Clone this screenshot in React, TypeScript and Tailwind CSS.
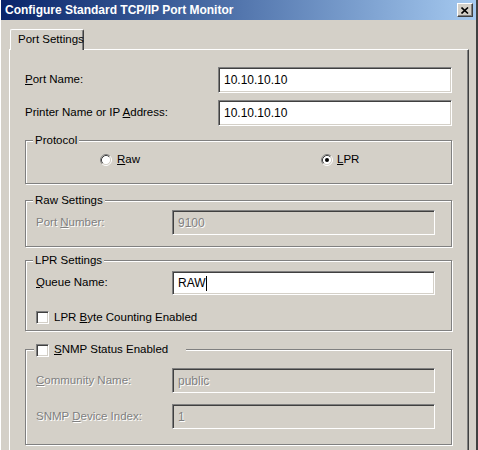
import React from 'react';

const sunken =
  'border border-t-[#808080] border-l-[#808080] border-b-white border-r-white shadow-[inset_1px_1px_0_#404040,inset_-1px_-1px_0_#d4d0c8]';
const etched = 'relative border border-[#808080] shadow-[inset_1px_1px_0_#fff,1px_1px_0_#fff]';
const disabledText = 'text-[#808080] [text-shadow:1px_1px_0_#fff]';

const Radio: React.FC<{ checked?: boolean }> = ({ checked }) => (
  <svg width="12" height="12" viewBox="0 0 12 12" className="shrink-0">
    <circle cx="6" cy="6" r="4.5" fill="#fff" />
    <path d="M2.11 9.89A5.5 5.5 0 0 1 9.89 2.11" fill="none" stroke="#808080" />
    <path d="M9.89 2.11A5.5 5.5 0 0 1 2.11 9.89" fill="none" stroke="#fff" />
    <path d="M2.82 9.18A4.5 4.5 0 0 1 9.18 2.82" fill="none" stroke="#404040" />
    <path d="M9.18 2.82A4.5 4.5 0 0 1 2.82 9.18" fill="none" stroke="#d4d0c8" />
    {checked && <circle cx="6" cy="6" r="2" fill="#000" />}
  </svg>
);

const Checkbox: React.FC = () => <span className={`w-[13px] h-[13px] shrink-0 bg-white ${sunken}`} />;

const GroupLabel: React.FC<{ children: React.ReactNode }> = ({ children }) => (
  <span className="absolute left-[7px] -top-[8px] px-[2px] leading-[14px] bg-[#d4d0c8]">{children}</span>
);

const Field: React.FC<{ value: string; disabled?: boolean; caret?: boolean; h?: string }> = ({
  value,
  disabled,
  caret,
  h = 'h-[25px]',
}) => (
  <div
    className={`w-[263px] ${h} flex items-center pl-[5px] ${sunken} ${
      disabled ? `bg-[#d4d0c8] ${disabledText}` : 'bg-white'
    }`}
  >
    <span className="text-[12px]">{value}</span>
    {caret && <span className="inline-block w-px h-[15px] bg-black" />}
  </div>
);

export default function App() {
  return (
    <div className="w-[478px] h-[450px] overflow-hidden bg-[#d4d0c8] flex flex-col border-l border-l-white border-r-2 border-r-[#404040] text-[11.5px] text-black font-['Liberation_Sans',Arial,sans-serif]">
      {/* Title bar */}
      <div className="h-[20px] shrink-0 flex items-center justify-between pl-[4px] pr-[3px] bg-linear-to-r from-[#0a246a] to-[#a6caf0]">
        <span className="text-white font-bold text-[12px]">Configure Standard TCP/IP Port Monitor</span>
        <button className="w-[16px] h-[14px] flex items-center justify-center bg-[#d4d0c8] border border-t-white border-l-white border-b-[#404040] border-r-[#404040] shadow-[inset_-1px_-1px_0_#808080]">
          <svg width="8" height="7" viewBox="0 0 8 7">
            <path d="M0.5 0.5L7 6.5M7 0.5L0.5 6.5" stroke="#000" strokeWidth="1.6" />
          </svg>
        </button>
      </div>

      {/* Tabs */}
      <div className="mt-[9px] pl-[9px] flex">
        <div className="relative z-10 -mb-px w-[74px] h-[21px] flex items-center pl-[7px] whitespace-nowrap bg-[#d4d0c8] border-t border-l border-t-white border-l-white border-r border-r-[#404040] shadow-[inset_-1px_0_0_#808080] rounded-t-[2px]">
          Port Settings
        </div>
      </div>

      {/* Tab panel */}
      <div className="ml-[8px] w-[460px] flex-1 border-t border-l border-t-white border-l-white border-r border-r-[#404040] shadow-[inset_-1px_0_0_#808080] pt-[17px] pl-[15px]">
        <div className="flex items-center">
          <span className="w-[193px]">
            <u>P</u>ort Name:
          </span>
          <div className={`w-[234px] h-[26px] flex items-center pl-[5px] bg-white ${sunken}`}>
            <span className="text-[12px]">10.10.10.10</span>
          </div>
        </div>
        <div className="flex items-center mt-[7px]">
          <span className="w-[193px]">
            Printer Name or IP <u>A</u>ddress:
          </span>
          <div className={`w-[234px] h-[26px] flex items-center pl-[5px] bg-white ${sunken}`}>
            <span className="text-[12px]">10.10.10.10</span>
          </div>
        </div>

        {/* Protocol */}
        <div className={`${etched} w-[427px] h-[44px] mt-[14px] pt-[12px] pl-[74px]`}>
          <GroupLabel>Protocol</GroupLabel>
          <div className="flex items-center h-[14px]">
            <label className="w-[221px] flex items-center gap-[5px]">
              <Radio />
              <span>
                <u>R</u>aw
              </span>
            </label>
            <label className="flex items-center gap-[4px]">
              <Radio checked />
              <span>
                <u>L</u>PR
              </span>
            </label>
          </div>
        </div>

        {/* Raw Settings */}
        <div className={`${etched} w-[427px] h-[47px] mt-[16px] pt-[9px] pl-[10px]`}>
          <GroupLabel>Raw Settings</GroupLabel>
          <div className="flex items-center">
            <span className={`w-[136px] ${disabledText}`}>
              Port <u>N</u>umber:
            </span>
            <Field value="9100" disabled />
          </div>
        </div>

        {/* LPR Settings */}
        <div className={`${etched} w-[427px] h-[71px] mt-[13px] pt-[10px] pl-[10px]`}>
          <GroupLabel>LPR Settings</GroupLabel>
          <div className="flex items-center">
            <span className="w-[136px]">
              <u>Q</u>ueue Name:
            </span>
            <Field value="RAW" caret h="h-[24px]" />
          </div>
          <label className="mt-[14px] flex items-center gap-[5px]">
            <Checkbox />
            <span>
              LPR <u>B</u>yte Counting Enabled
            </span>
          </label>
        </div>

        {/* SNMP */}
        <div className={`${etched} w-[427px] h-[96px] mt-[18px] pt-[18px] pl-[10px]`}>
          <label className="absolute left-[8px] -top-[7px] w-[152px] h-[14px] pl-[2px] flex items-center gap-[5px] bg-[#d4d0c8]">
            <Checkbox />
            <span>
              <u>S</u>NMP Status Enabled
            </span>
          </label>
          <div className="flex items-center">
            <span className={`w-[136px] ${disabledText}`}>
              <u>C</u>ommunity Name:
            </span>
            <Field value="public" disabled />
          </div>
          <div className="flex items-center mt-[11px]">
            <span className={`w-[136px] ${disabledText}`}>
              SNMP <u>D</u>evice Index:
            </span>
            <Field value="1" disabled />
          </div>
        </div>
      </div>
    </div>
  );
}
